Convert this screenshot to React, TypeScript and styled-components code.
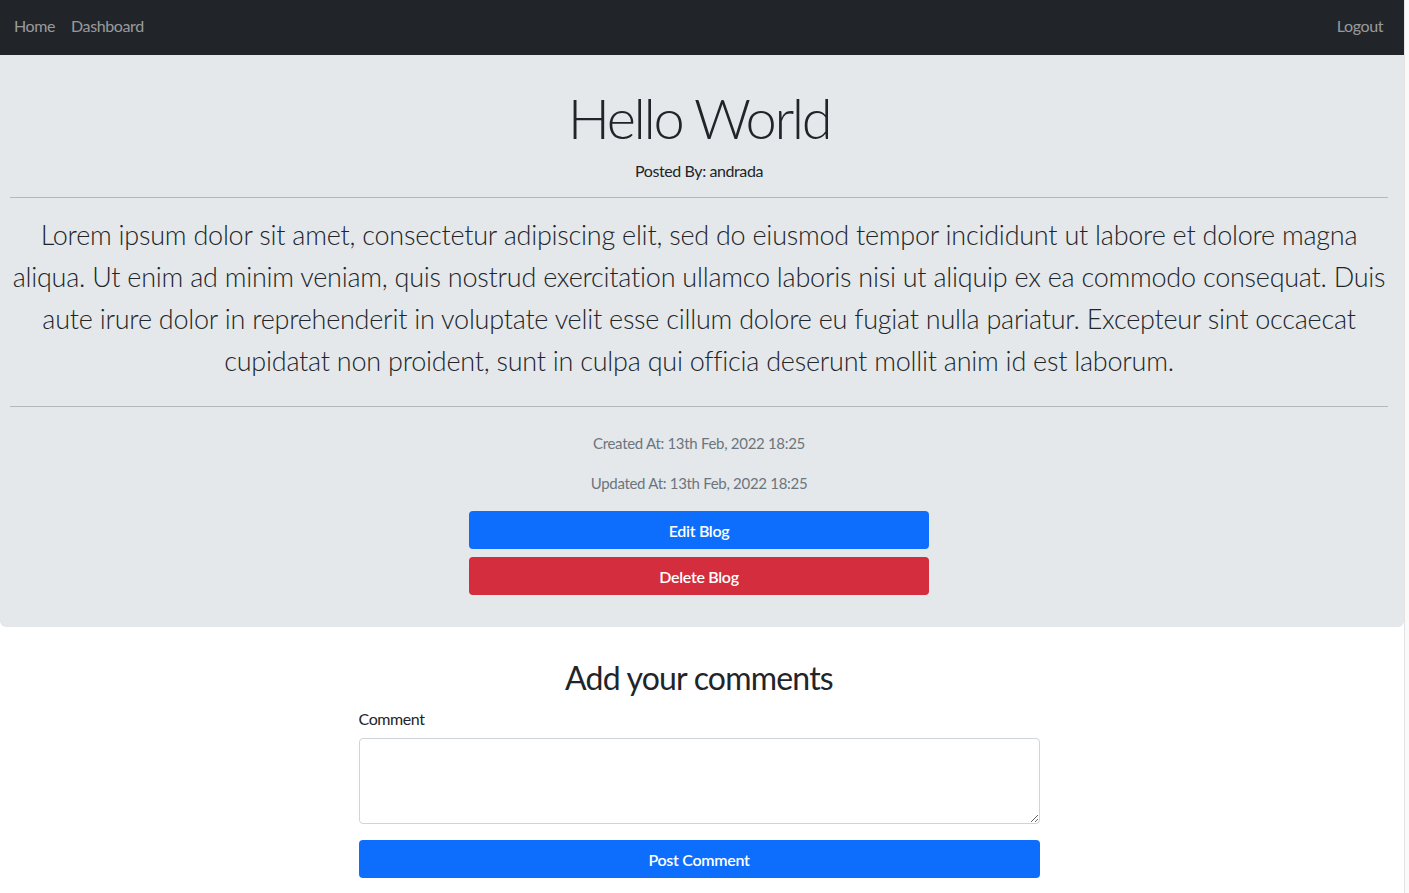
import React from "react";
import styled, { createGlobalStyle } from "styled-components";

const Global = createGlobalStyle`
  * { box-sizing: border-box; }
  html, body { margin: 0; padding: 0; height: 100%; overflow: hidden; }
  body {
    font-family: "Lato", "Liberation Sans", sans-serif;
    color: #212529;
    background: #ffffff;
    letter-spacing: -0.4px;
  }
`;

const Shell = styled.div`
  display: flex;
  width: 1409px;
  height: 893px;
  overflow: hidden;
`;

const Page = styled.div`
  flex: 1;
  min-width: 0;
  display: flex;
  flex-direction: column;
`;

const ScrollTrack = styled.div`
  width: 5px;
  flex: none;
  border-left: 1px solid #e2e2e2;
  background: #fafafa;
`;

const NavBar = styled.nav`
  height: 55px;
  background: #212529;
  display: flex;
  align-items: center;
  justify-content: space-between;
  padding: 0 13px 4px 6px;
`;

const NavGroup = styled.div`
  display: flex;
  align-items: center;
`;

const NavLink = styled.a`
  color: rgba(255, 255, 255, 0.55);
  font-size: 16px;
  padding: 8px;
  text-decoration: none;
`;

const Jumbo = styled.section`
  background: #e4e8eb;
  border-radius: 0 0 6px 6px;
  padding: 29px 16px 32px 10px;
  display: flex;
  flex-direction: column;
  align-items: center;
`;

const Title = styled.h1`
  margin: 0;
  font-size: 56px;
  font-weight: 300;
  line-height: 1.2;
  letter-spacing: -2.4px;
`;

const Author = styled.p`
  margin: 8px 0 0;
  font-size: 16px;
  line-height: 24px;
`;

const Rule = styled.hr<{ $top: number; $bottom: number }>`
  align-self: stretch;
  margin: ${(p) => `${p.$top}px 0 ${p.$bottom}px`};
  border: 0;
  border-top: 1px solid #b4b8bc;
`;

const Lead = styled.p`
  margin: 0;
  font-size: 27px;
  font-weight: 300;
  line-height: 42px;
  letter-spacing: -0.24px;
  text-align: center;
`;

const Meta = styled.p`
  margin: 0 0 16px;
  font-size: 15px;
  line-height: 24px;
  letter-spacing: -0.3px;
  color: #6c757d;
`;

const Stack = styled.div`
  display: flex;
  flex-direction: column;
  gap: 8px;
  width: 460px;
`;

const Button = styled.button<{ $variant: "primary" | "danger" }>`
  height: 38px;
  width: 100%;
  border: 0;
  border-radius: 4px;
  font-family: inherit;
  font-size: 16px;
  font-weight: 600;
  letter-spacing: -0.3px;
  color: #fff;
  background: ${(p) => (p.$variant === "danger" ? "#d42d3e" : "#0d6efd")};
  cursor: pointer;
`;

const CommentSection = styled.section`
  display: flex;
  flex-direction: column;
  align-items: center;
  padding: 32px 6px 0 0;
`;

const SubTitle = styled.h2`
  margin: 0 0 10px;
  font-size: 32px;
  font-weight: 400;
  line-height: 38px;
  letter-spacing: -0.8px;
`;

const Form = styled.form`
  width: 681px;
  display: flex;
  flex-direction: column;
`;

const Label = styled.label`
  font-size: 16px;
  line-height: 24px;
  margin-bottom: 7px;
`;

const TextArea = styled.textarea`
  height: 86px;
  border: 1px solid #ced4da;
  border-radius: 4px;
  padding: 6px 12px;
  font-family: inherit;
  font-size: 16px;
  resize: vertical;
  margin-bottom: 16px;
`;

export default function App() {
  return (
    <>
      <Global />
      <Shell>
        <Page>
          <NavBar>
            <NavGroup>
              <NavLink href="#">Home</NavLink>
              <NavLink href="#">Dashboard</NavLink>
            </NavGroup>
            <NavGroup>
              <NavLink href="#">Logout</NavLink>
            </NavGroup>
          </NavBar>
          <Jumbo>
            <Title>Hello World</Title>
            <Author>Posted By: andrada</Author>
            <Rule $top={14} $bottom={16} />
            <Lead>
              Lorem ipsum dolor sit amet, consectetur adipiscing elit, sed do eiusmod tempor incididunt ut labore et
              dolore magna aliqua. Ut enim ad minim veniam, quis nostrud exercitation ullamco laboris nisi ut aliquip
              ex ea commodo consequat. Duis aute irure dolor in reprehenderit in voluptate velit esse cillum dolore eu
              fugiat nulla pariatur. Excepteur sint occaecat cupidatat non proident, sunt in culpa qui officia deserunt
              mollit anim id est laborum.
            </Lead>
            <Rule $top={24} $bottom={24} />
            <Meta>Created At: 13th Feb, 2022 18:25</Meta>
            <Meta>Updated At: 13th Feb, 2022 18:25</Meta>
            <Stack>
              <Button $variant="primary">Edit Blog</Button>
              <Button $variant="danger">Delete Blog</Button>
            </Stack>
          </Jumbo>
          <CommentSection>
            <SubTitle>Add your comments</SubTitle>
            <Form onSubmit={(e) => e.preventDefault()}>
              <Label>Comment</Label>
              <TextArea />
              <Button $variant="primary" type="submit">Post Comment</Button>
            </Form>
          </CommentSection>
        </Page>
        <ScrollTrack />
      </Shell>
    </>
  );
}
